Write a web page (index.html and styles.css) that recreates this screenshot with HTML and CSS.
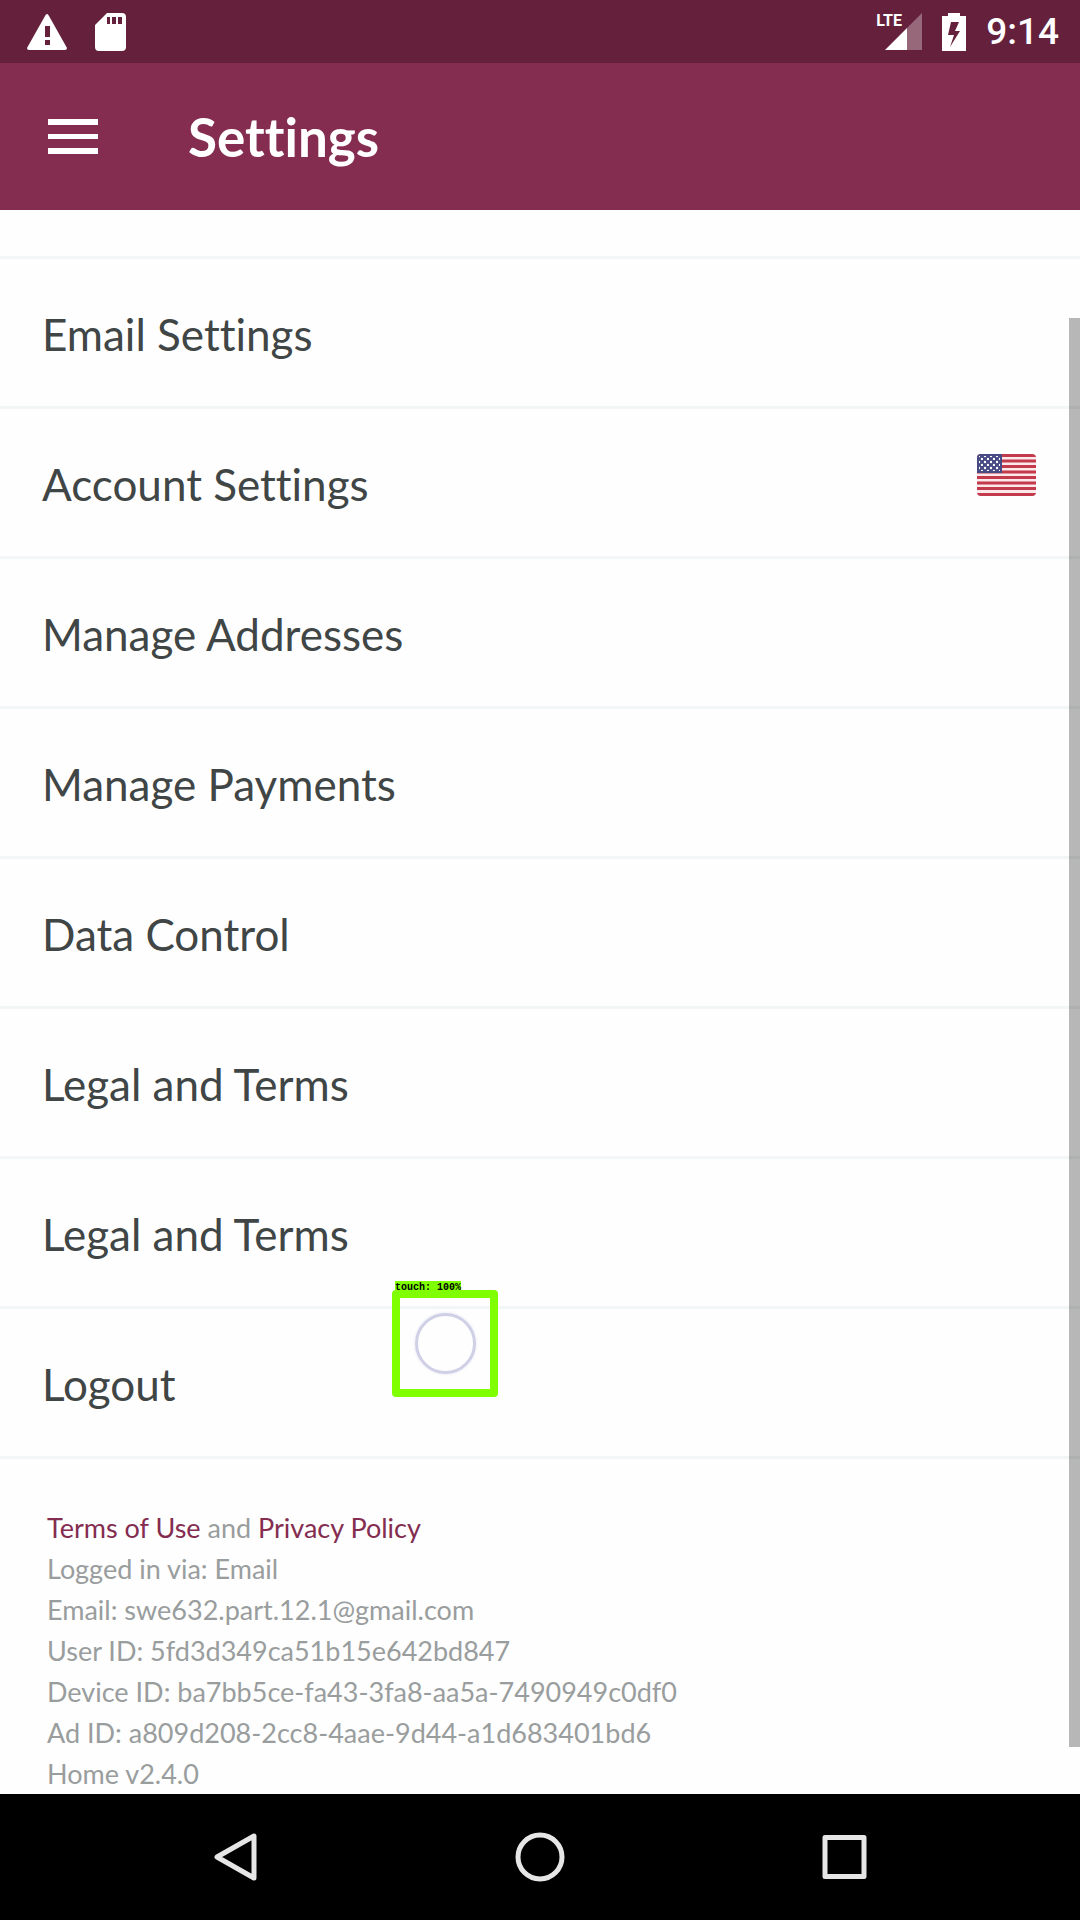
FILE: index.html
```html
<!DOCTYPE html>
<html lang="en">
<head>
<meta charset="utf-8">
<meta name="viewport" content="width=device-width, initial-scale=1">
<title>Settings</title>
<link rel="stylesheet" href="styles.css">
</head>
<body>
<div class="status-bar">
  <div class="status-group status-left">
    <svg width="40" height="36" viewBox="0 0 40 36" aria-hidden="true"><path fill="#fff" fill-rule="evenodd" d="M20 0Q21 0 22 2L40 34Q40 36 38 36H2Q0 36 0 34L18 2Q19 0 20 0ZM18 12v11h5V12ZM18 26v5h5v-5Z"/></svg>
    <svg width="31" height="38" viewBox="0 0 31 38" aria-hidden="true"><path fill="#fff" fill-rule="evenodd" d="M12 0h15q4 0 4 4v30q0 4-4 4H4q-4 0-4-4V12ZM12 4v7h3V4ZM17 4v7h4V4ZM23 4v7h4V4Z"/></svg>
  </div>
  <div class="status-group status-right">
    <div class="signal">
      <span class="network">LTE</span>
      <svg width="37" height="37" viewBox="0 0 37 37" aria-hidden="true"><path fill="#fff" fill-opacity=".32" d="M37 0v37H22V15Z"/><path fill="#fff" d="M22 15v22H0Z"/></svg>
    </div>
    <svg width="24" height="38" viewBox="0 0 24 38" aria-hidden="true"><path fill="#fff" fill-rule="evenodd" d="M6 0h12v3h6v35H0V3h6ZM9 9L6 22h6L8 34l10-16h-5l4-9Z"/></svg>
    <time class="clock">9:14</time>
  </div>
</div>
<header class="app-bar">
  <button class="menu-button" type="button" aria-label="Menu"><svg width="50" height="36" viewBox="0 0 50 36" aria-hidden="true"><path fill="#fff" d="M0 0h50v6H0ZM0 15h50v5H0ZM0 29h50v6H0Z"/></svg></button>
  <h1 class="title">Settings</h1>
</header>
<main class="content">
  <ul class="settings">
    <li class="spacer"></li>
    <li><a class="row" href="#">Email Settings</a></li>
    <li><a class="row" href="#">Account Settings
      <svg class="flag" width="59" height="42" viewBox="0 0 59 42" role="img" aria-label="United States">
        <defs>
          <clipPath id="flag-shape"><rect width="59" height="42" rx="4"/></clipPath>
          <pattern id="stars" width="6" height="6" patternUnits="userSpaceOnUse"><circle cx="2" cy="2" r="1.2" fill="#fff"/><circle cx="5" cy="5" r="1.2" fill="#fff"/></pattern>
        </defs>
        <g clip-path="url(#flag-shape)">
          <rect width="59" height="42" fill="#fbe9ec"/>
          <path stroke="#c23a4b" stroke-width="3" d="M0 1.5h59M0 7h59M0 12.5h59M0 18h59M0 23.500h59M0 29h59M0 34.500h59M0 40.4h59"/>
          <rect width="25" height="19" fill="#484b83"/>
          <rect x="2" y="2" width="21" height="15" fill="url(#stars)"/>
        </g>
      </svg></a></li>
    <li><a class="row" href="#">Manage Addresses</a></li>
    <li><a class="row" href="#">Manage Payments</a></li>
    <li><a class="row" href="#">Data Control</a></li>
    <li><a class="row" href="#">Legal and Terms</a></li>
    <li><a class="row" href="#">Legal and Terms</a></li>
    <li class="touched"><a class="row" href="#">Logout</a>
      <div class="touch-box"><span class="touch-label">touch: 100%</span><span class="touch-ring"></span></div>
    </li>
  </ul>
  <div class="about">
    <p><a href="#">Terms of Use</a> and <a href="#">Privacy Policy</a></p>
    <p>Logged in via: Email</p>
    <p>Email: swe632.part.12.1@gmail.com</p>
    <p>User ID: 5fd3d349ca51b15e642bd847</p>
    <p>Device ID: ba7bb5ce-fa43-3fa8-aa5a-7490949c0df0</p>
    <p>Ad ID: a809d208-2cc8-4aae-9d44-a1d683401bd6</p>
    <p>Home v2.4.0</p>
  </div>
  <div class="scrollbar"></div>
</main>
<nav class="nav-bar" aria-label="System">
  <button type="button" aria-label="Back"><svg width="52" height="52" viewBox="0 0 52 52" fill="none" stroke="#e6e6e6" stroke-width="5" stroke-linejoin="round" aria-hidden="true"><path d="M43 5v42L6 26Z"/></svg></button>
  <button type="button" aria-label="Home"><svg width="52" height="52" viewBox="0 0 52 52" fill="none" stroke="#e6e6e6" stroke-width="5" aria-hidden="true"><circle cx="26" cy="26" r="22"/></svg></button>
  <button type="button" aria-label="Recent apps"><svg width="52" height="52" viewBox="0 0 52 52" fill="none" stroke="#e6e6e6" stroke-width="5" stroke-linejoin="round" aria-hidden="true"><path d="M8 6.500h39v39h-39Z"/></svg></button>
</nav>
</body>
</html>
```
FILE: styles.css
```css
* {
  box-sizing: border-box;
}

body {
  margin: 0;
  min-height: 100vh;
  display: flex;
  flex-direction: column;
  background: #fefefe;
  color: #404545;
  font-family: Lato, "Open Sans", sans-serif;
  font-variant-ligatures: none;
}

button {
  display: flex;
  padding: 0;
  border: 0;
  background: none;
}

a {
  color: #842d50;
  text-decoration: none;
}

svg {
  display: block;
}

.status-bar {
  height: 63px;
  padding: 0 21px 0 27px;
  display: flex;
  align-items: center;
  justify-content: space-between;
  background: #65213c;
}

.status-group {
  display: flex;
  align-items: center;
}

.status-left {
  gap: 28px;
}

.status-right {
  gap: 20px;
}

.signal {
  display: flex;
  position: relative;
  padding-left: 9px;
}

.network {
  position: absolute;
  left: 0;
  top: 0;
  color: #fff;
  font: 700 16px/16px Roboto, sans-serif;
}

.clock {
  color: #fff;
  font: 500 37px/40px Roboto, sans-serif;
}

.app-bar {
  height: 147px;
  padding: 0 48px;
  display: flex;
  align-items: center;
  gap: 90px;
  background: #842d50;
}

.title {
  margin: 0;
  color: #fff;
  font-size: 53px;
  line-height: 60px;
  font-weight: 700;
}

.content {
  position: relative;
  flex: 1;
}

.settings {
  margin: 0;
  padding: 0;
  list-style: none;
}

.spacer {
  height: 49px;
  border-bottom: 3px solid #f3f6f6;
}

.row {
  height: 150px;
  padding: 2px 44px 0 42px;
  display: flex;
  align-items: center;
  justify-content: space-between;
  border-bottom: 3px solid #f3f6f6;
  color: #404545;
  font-size: 44px;
  line-height: 50px;
}

.flag {
  margin-bottom: 18px;
}

.touched {
  position: relative;
}

.touch-box {
  position: absolute;
  left: 392px;
  top: -19px;
  width: 106px;
  height: 107px;
  border: 8px solid #80ff00;
  border-radius: 4px;
  display: grid;
  place-items: center;
}

.touch-label {
  position: absolute;
  left: -5px;
  top: -17px;
  background: #80ff00;
  color: #000;
  font: 700 10px/13px "Liberation Mono", monospace;
}

.touch-ring {
  width: 61px;
  height: 61px;
  border: 3px solid #cfcfe6;
  border-radius: 50%;
  box-shadow: 0 0 3px #e2e2f2;
}

.about {
  padding: 48px 47px 0;
  color: #999d9d;
  font-size: 27px;
  line-height: 41px;
}

.about p {
  margin: 0;
}

.scrollbar {
  position: absolute;
  top: 108px;
  right: 0;
  bottom: 47px;
  width: 11px;
  background: rgba(0, 0, 0, 0.28);
}

.nav-bar {
  height: 126px;
  padding: 0 211px;
  display: flex;
  align-items: center;
  justify-content: space-between;
  background: #000;
}
```
